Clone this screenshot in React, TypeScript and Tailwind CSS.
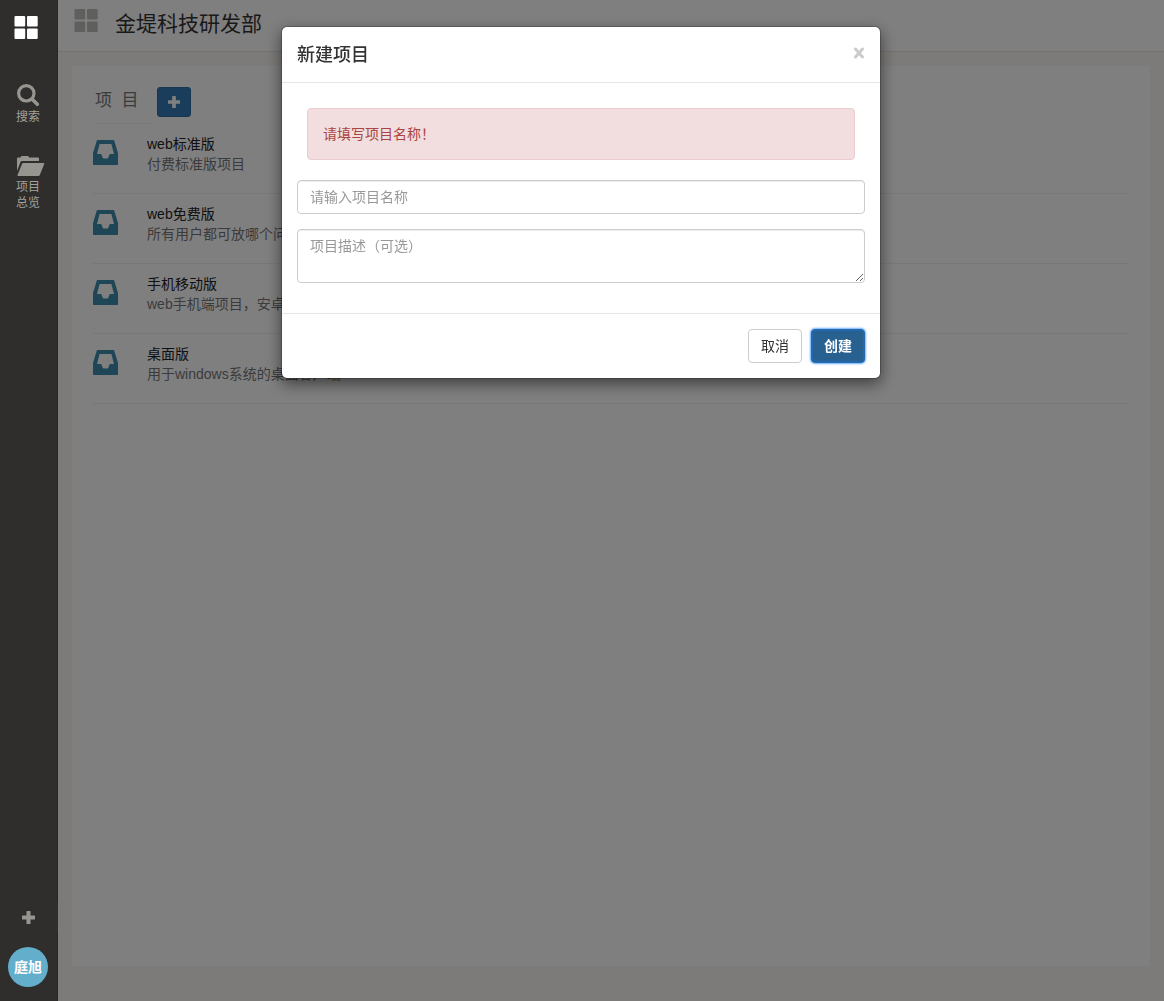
import { useState } from "react";

const projects = [
  { id: 1, name: "web标准版", desc: "付费标准版项目" },
  { id: 2, name: "web免费版", desc: "所有用户都可放哪个问" },
  { id: 3, name: "手机移动版", desc: "web手机端项目，安卓" },
  { id: 4, name: "桌面版", desc: "用于windows系统的桌面客户端" },
];

export default function App() {
  const [open, setOpen] = useState(true);

  return (
    <div className="flex min-h-screen bg-[#faf7f2] font-['Liberation_Sans','Noto_Sans_CJK_SC',sans-serif] text-sm leading-5 text-[#333]">
      <Sidebar />

      <div className="flex min-w-0 flex-1 flex-col">
        <header className="flex h-13 items-start gap-4.25 border-b border-[#e4e4e4] bg-white pt-2 pl-4">
          <GridIcon className="size-6 text-[#bfbfbb]" />
          <h1 className="text-[21px] leading-8">金堤科技研发部</h1>
        </header>

        <main className="mx-3.5 mt-3.5 mb-8.75 flex-1 bg-white px-5.25 pt-5.25">
          <div className="flex items-start">
            <h2 className="h-9.25 w-15 border-b border-[#f4f4f4] pt-0.5 pl-0.5 text-[17px] leading-6 whitespace-nowrap text-[#777]">
              项&nbsp;&nbsp;目
            </h2>
            <button
              aria-label="新建项目"
              onClick={() => setOpen(true)}
              className="ml-1 flex h-7.5 w-8.5 items-center justify-center rounded-[3px] border border-[#2e6da4] bg-[#337ab7] text-white"
            >
              <PlusIcon className="size-3" />
            </button>
          </div>

          <ul>
            {projects.map((p) => (
              <li key={p.id} className="flex h-17.5 gap-7.25 border-b border-[#f1f1f1] pt-2.5">
                <InboxIcon className="mt-1.5 size-6.25 shrink-0 text-[#3e8cad]" />
                <div>
                  <a href="#" className="text-[#222]">{p.name}</a>
                  <p className="text-[#777]">{p.desc}</p>
                </div>
              </li>
            ))}
          </ul>
        </main>
      </div>

      {open && <CreateModal onClose={() => setOpen(false)} />}
    </div>
  );
}

function Sidebar() {
  return (
    <aside className="relative z-50 flex w-14.5 shrink-0 flex-col border-r border-[#1d2a2d] bg-[#2f2e2c] text-xs leading-4 text-[#a3a19c]">
      <a href="#" aria-label="首页" className="mt-3.75 ml-3.5 text-white">
        <GridIcon className="size-6" />
      </a>
      <a href="#" className="mt-11 ml-4 flex w-8 flex-col">
        <SearchIcon className="ml-px size-6 text-[#979590]" />
        <span className="mt-0.5">搜索</span>
      </a>
      <a href="#" className="mt-7.75 ml-4 flex w-8 flex-col">
        <FolderIcon className="ml-px h-5 w-7 text-[#979590]" />
        <span className="mt-0.75 w-6">项目总览</span>
      </a>
      <button
        aria-label="添加"
        className="mt-auto -mr-px flex h-7.5 items-center justify-center bg-[#2f2e2c] pr-0.5 text-[#979590]"
      >
        <PlusIcon className="size-3.25" />
      </button>
      <button className="mt-3.75 mb-3.5 ml-2 size-10 rounded-full bg-[#63aecb] text-sm font-bold whitespace-nowrap text-white">
        庭旭
      </button>
    </aside>
  );
}

function CreateModal({ onClose }: { onClose: () => void }) {
  const [name, setName] = useState("");
  const [desc, setDesc] = useState("");

  return (
    <div className="fixed inset-0 z-40 bg-black/50 pt-6.5 pr-2.5 pl-2">
      <div
        role="dialog"
        aria-labelledby="modal-title"
        className="mx-auto max-w-150 rounded-md border border-black/20 bg-white bg-clip-padding shadow-[0_5px_15px_rgba(0,0,0,0.5)]"
      >
        <div className="flex items-start justify-between border-b border-[#e5e5e5] px-3.75 pt-4 pb-3.5">
          <h4 id="modal-title" className="text-lg leading-6.25 font-medium">新建项目</h4>
          <button aria-label="关闭" onClick={onClose} className="mt-1 text-[#ccc]">
            <CloseIcon className="size-3" />
          </button>
        </div>

        <div className="flex flex-col p-3.75">
          <div role="alert" className="mx-2.5 mt-2.5 mb-5 rounded border border-[#ebccd1] bg-[#f2dede] p-3.75 text-[#a94442]">
            请填写项目名称！
          </div>
          <input
            type="text"
            aria-label="项目名称"
            placeholder="请输入项目名称"
            value={name}
            onChange={(e) => setName(e.target.value)}
            className="mb-3.75 h-8.5 rounded border border-[#ccc] px-3 shadow-[inset_0_1px_1px_rgba(0,0,0,0.075)] placeholder:text-[#999]"
          />
          <textarea
            aria-label="项目描述"
            placeholder="项目描述（可选）"
            value={desc}
            onChange={(e) => setDesc(e.target.value)}
            className="mb-3.75 h-13.5 rounded border border-[#ccc] px-3 py-1.5 shadow-[inset_0_1px_1px_rgba(0,0,0,0.075)] placeholder:text-[#999]"
          />
        </div>

        <div className="flex justify-end gap-2.25 border-t border-[#e5e5e5] p-3.75">
          <button onClick={onClose} className="h-8.5 rounded border border-[#ccc] px-3">
            取消
          </button>
          <button className="h-8.5 rounded border border-[#2469b0] bg-[#286090] px-3 font-bold text-white shadow-[inset_0_0_1px_1px_#2469b0,0_0_2px_1px_#6fb0ff]">
            创建
          </button>
        </div>
      </div>
    </div>
  );
}

type IconProps = { className?: string };

function GridIcon({ className }: IconProps) {
  return (
    <svg viewBox="0 0 24 24" fill="currentColor" className={className}>
      <rect x=".5" y="1" width="10.700" height="10.500" rx="1" />
      <rect x="13" y="1" width="10.700" height="10.500" rx="1" />
      <rect x=".5" y="13.400" width="10.700" height="10.500" rx="1" />
      <rect x="13" y="13.400" width="10.700" height="10.500" rx="1" />
    </svg>
  );
}

function SearchIcon({ className }: IconProps) {
  return (
    <svg viewBox="0 0 24 24" fill="none" stroke="currentColor" className={className}>
      <circle cx="9.300" cy="10.300" r="7.700" strokeWidth="3.200" />
      <path d="M15.500 16.500l4.800 4.800" strokeWidth="3.600" strokeLinecap="round" />
    </svg>
  );
}

function FolderIcon({ className }: IconProps) {
  return (
    <svg viewBox="0 0 28 20" fill="currentColor" className={className}>
      <path d="M0 15V2.500Q0 1.500 1 1.500H3.500L4.500 0H11L12.300 1.500H21Q22 1.500 22 2.500V5H5Q3.900 5 3.500 6Z" />
      <path d="M6.300 7H26.600Q27.600 7 27.200 8L22.800 19Q22.400 20 21.500 20H1.200Q0 20 .5 19L5 8Q5.400 7 6.300 7Z" />
    </svg>
  );
}

function PlusIcon({ className }: IconProps) {
  return (
    <svg viewBox="0 0 13 13" fill="currentColor" className={className}>
      <path d="M5 0h3q.5 0 .5.5v4h4q.5 0 .5.5v3q0 .5-.5.5h-4v4q0 .5-.5.5H5q-.5 0-.5-.5v-4h-4Q0 8.500 0 8V5q0-.5.5-.5h4v-4Q4.500 0 5 0z" />
    </svg>
  );
}

function InboxIcon({ className }: IconProps) {
  return (
    <svg viewBox="0 0 25 25" fill="currentColor" fillRule="evenodd" className={className}>
      <path d="M4.500 0H20.500Q21 0 21.200.6L25 13V24.200Q25 25 24.200 25H.8Q0 25 0 24.200V13L3.800.6Q4 0 4.500 0ZM6.600 4L4 14H7.600Q8.300 14 8.600 14.700L9.700 17.700Q9.900 18.500 10.600 18.500H14.400Q15.100 18.500 15.300 17.700L16.400 14.700Q16.700 14 17.400 14H21L18.400 4Z" />
    </svg>
  );
}

function CloseIcon({ className }: IconProps) {
  return (
    <svg viewBox="0 0 12 12" fill="none" stroke="currentColor" strokeWidth="3" strokeLinecap="round" className={className}>
      <path d="M2.500 2l7 8M9.500 2l-7 8" />
    </svg>
  );
}
